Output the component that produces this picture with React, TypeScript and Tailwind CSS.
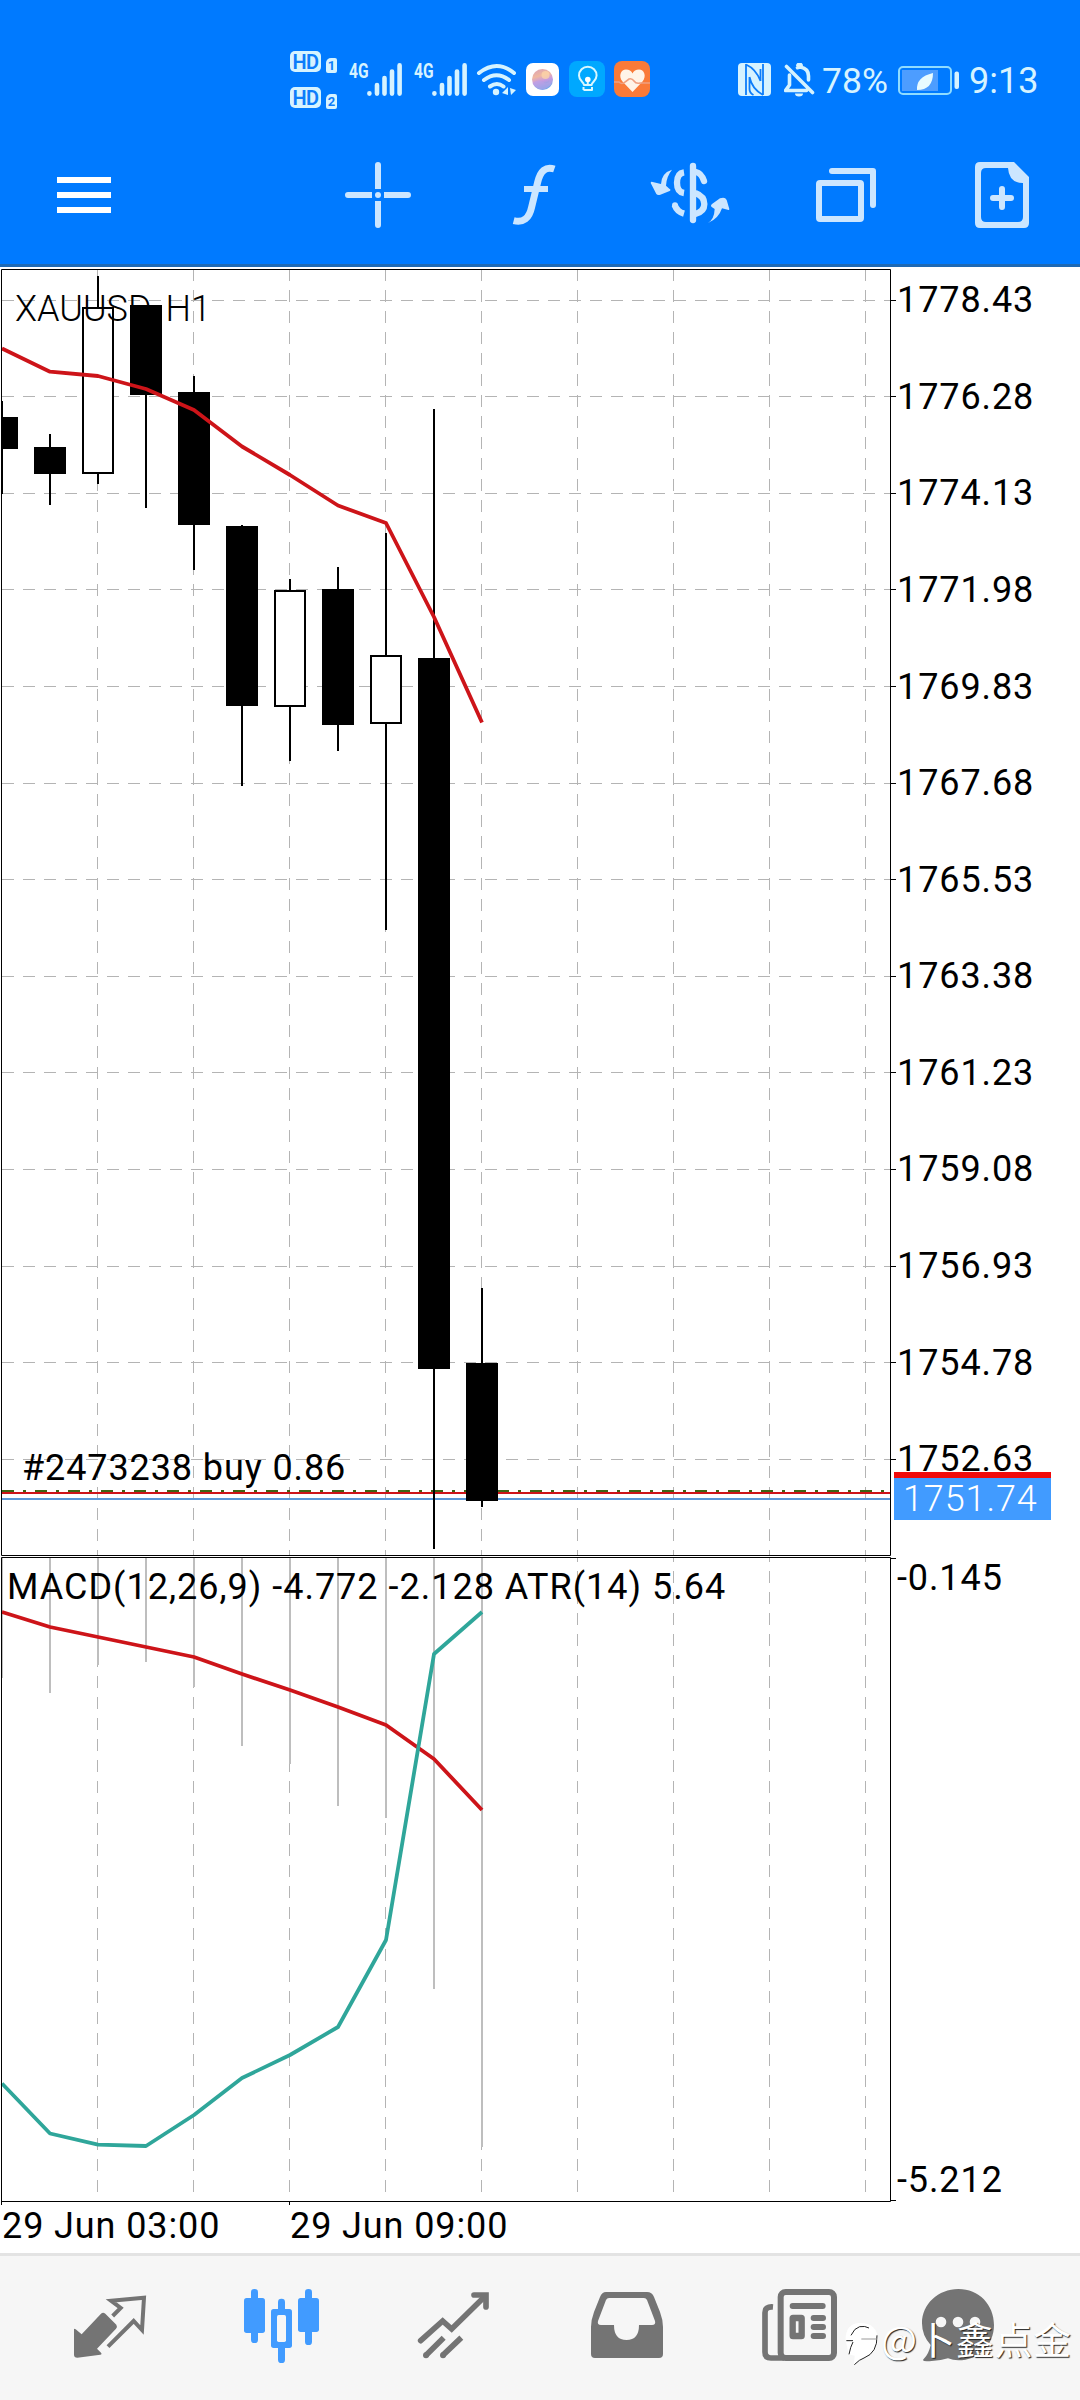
import type { ReactNode } from "react";

const PRICES = [
  "1778.43", "1776.28", "1774.13", "1771.98", "1769.83", "1767.68", "1765.53",
  "1763.38", "1761.23", "1759.08", "1756.93", "1754.78", "1752.63",
];

type Candle = { hi: number; top: number; bottom: number; lo: number; up?: boolean };

const CANDLES: Candle[] = [
  { hi: 401, top: 417, bottom: 449, lo: 494 },
  { hi: 434, top: 447, bottom: 474, lo: 505 },
  { hi: 276, top: 307, bottom: 474, lo: 484, up: true },
  { hi: 305, top: 305, bottom: 395, lo: 508 },
  { hi: 376, top: 392, bottom: 525, lo: 570 },
  { hi: 525, top: 526, bottom: 706, lo: 786 },
  { hi: 579, top: 590, bottom: 707, lo: 761, up: true },
  { hi: 567, top: 589, bottom: 725, lo: 751 },
  { hi: 533, top: 655, bottom: 724, lo: 930, up: true },
  { hi: 409, top: 658, bottom: 1369, lo: 1549 },
  { hi: 1288, top: 1363, bottom: 1501, lo: 1507 },
];

const MA = [348.5, 371.7, 376, 389, 410, 446.5, 475, 505.5, 523, 617, 722.5];
const HISTOGRAM = [1678, 1693, 1665, 1662, 1687, 1746, 1764, 1806, 1818, 1989, 2147];
const SIGNAL = [1612, 1627, 1637, 1647, 1657, 1674, 1690, 1707, 1725, 1759, 1810];
const ATR = [2083.5, 2133.5, 2144.7, 2146, 2115, 2078, 2055, 2027, 1940, 1654, 1612];

const barX = (i: number) => 2 + i * 48;
const toPoints = (ys: number[]) => ys.map((y, i) => `${barX(i)},${y}`).join(" ");

function Glyph({ box, k = 1, className, children }: { box: [number, number, number, number]; k?: number; className?: string; children: ReactNode }) {
  return (
    <svg width={box[2] / k} height={box[3] / k} viewBox={box.join(" ")} className={"block shrink-0 " + (className ?? "")} fill="none">
      {children}
    </svg>
  );
}

function HdBadge({ n }: { n: string }) {
  return (
    <div className="flex h-[22px] items-start gap-[5px]">
      <span className="flex h-[21px] w-[31px] items-center justify-center rounded-[5px] bg-[#d6f3ff] font-['Roboto'] text-[20px] leading-none font-semibold tracking-tight text-[#0d7dfa]">
        HD
      </span>
      <span className="mt-[7px] flex h-[15px] w-[11px] items-center justify-center rounded-[2px] rounded-tl-[5px] bg-[#d6f3ff] text-[13px] leading-none font-bold text-[#0d7dfa]">
        {n}
      </span>
    </div>
  );
}

function Signal({ className }: { className: string }) {
  return (
    <div className={"flex h-[33px] " + className}>
      <span className="block w-[18px] origin-left scale-x-[0.74] text-[21px] leading-[16px] font-bold whitespace-nowrap text-[#d6f3ff]">4G</span>
      <Glyph box={[0, 0, 35, 33]}>
        <g stroke="#d6f3ff" strokeWidth="4.6" strokeLinecap="round">
          <path d="M2.4 30.2v.4M10 22v8.6M17.5 15v15.6M25 8.5v22.1M32.6 2.4v28.2" />
        </g>
      </Glyph>
    </div>
  );
}

function StatusBar() {
  return (
    <div className="flex h-[117px] items-start pt-[51px] font-['Roboto',sans-serif]">
      <div className="ml-[290px] flex w-[47px] flex-col gap-[14px]">
        <HdBadge n="1" />
        <HdBadge n="2" />
      </div>
      <Signal className="mt-[12px] ml-[12px]" />
      <Signal className="mt-[12px] ml-[12px]" />
      <Glyph box={[476, 62, 42, 35]} className="mt-[11px] ml-[9px]">
        <g stroke="#d6f3ff" strokeWidth="4" strokeLinecap="round">
          <path d="M479 73q18-14 35 0M484 80q12.500-9.500 25 0M490 86.500q7-5 13.500 0" />
        </g>
        <circle cx="496" cy="92" r="3.200" fill="#d6f3ff" />
        <path d="M502 93l6-6v8zM510 88l6 2-5 5z" fill="#d6f3ff" />
      </Glyph>
      <Glyph box={[0, 0, 33, 33]} className="mt-[12px] ml-[8px]">
        <defs>
          <linearGradient id="orb" x1="0" y1="0" x2="0.3" y2="1">
            <stop offset="0" stopColor="#d9a0b8" />
            <stop offset="0.4" stopColor="#f0b8a0" />
            <stop offset="0.65" stopColor="#c79be0" />
            <stop offset="1" stopColor="#6fa8ea" />
          </linearGradient>
        </defs>
        <rect width="33" height="33" rx="7" fill="#fff" />
        <circle cx="16.500" cy="16.500" r="10.500" fill="url(#orb)" />
        <path d="M7 20q6-5 10-1t9-4q1 7-5 10-8 5-14-5" fill="#b9a2e6" opacity=".6" />
        <circle cx="19.500" cy="12" r="4" fill="#ffd9a8" opacity=".7" />
      </Glyph>
      <Glyph box={[0, 0, 36, 36]} className="mt-[10px] ml-[10px]">
        <rect width="36" height="36" rx="8" fill="#00a8ff" />
        <g stroke="#d9f7ff" strokeWidth="2">
          <path d="M15 24c0-3-5-4-5-9.500a8.800 8.800 0 0 1 17.600 0c0 5.500-5 6.500-5 9.500zM14.500 29h8.500v-3M14.500 26v3" strokeLinejoin="round" />
          <path d="M18.800 18v6" />
        </g>
        <circle cx="18.800" cy="18.500" r="2.800" fill="#fff" />
      </Glyph>
      <Glyph box={[0, 0, 36, 36]} className="mt-[10px] ml-[9px]">
        <rect width="36" height="36" rx="8" fill="#fa7a38" />
        <path d="M18.500 31L8.500 20.500C4 15 7 8.500 12 8.500c3 0 5.500 1.500 6.500 4 1-2.500 3.500-4 6.500-4 5 0 8 6.500 3.500 12z" fill="#fff4e8" />
        <path d="M0 21h5q3 3 6 0l4-3q3-1 5 2t6 2h10" stroke="#f0a080" strokeWidth="1.600" />
      </Glyph>
      <Glyph box={[0, 0, 33, 33]} className="mt-[12px] ml-[88px]">
        <rect width="33" height="33" rx="4" fill="#d6f3ff" />
        <path d="M7 2v29.500h9Q10 29 10 23V10l13 12V10Q14 3 7 2z" fill="#d6f3ff" />
        <path d="M8 1v31M8 1.500Q18 6 22.500 18M22.500 6v12M11.500 14v12q0 4 4 6M11.500 14Q14 26 25 32M25 1v31" stroke="#0d7dfa" strokeWidth="1.800" />
      </Glyph>
      <Glyph box={[0, 0, 32, 34]} className="mt-[12px] ml-[13px]">
        <g stroke="#d6f3ff" strokeWidth="3.600" strokeLinecap="round" strokeLinejoin="round">
          <path d="M2.500 3.500l26 26M5.500 12v10l-4 5.500h21M24.500 17v-4c0-5-3-8-8-9q-2 0-3 .7" />
        </g>
        <path d="M11 30.500h8a4 3 0 0 1-8 0zM12 3a3.500 3.500 0 0 1 7 0z" fill="#d6f3ff" />
      </Glyph>
      <span className="mt-[10px] ml-[6px] w-[66px] text-[35.500px] leading-[41px] whitespace-nowrap text-[#d6f3ff]">78%</span>
      <Glyph box={[897, 65, 63, 31]} className="mt-[14px] ml-[9px]">
        <rect x="899" y="67" width="52" height="27" rx="4" stroke="#8fdcff" strokeWidth="2" />
        <rect x="902" y="70" width="36" height="21" fill="#4d9dff" />
        <path d="M917 90q-1-13 16-17 0 17-16 17l13-14z" fill="#e8fbff" />
        <rect x="954.500" y="71.500" width="4.500" height="17.500" rx="2" fill="#d6f3ff" />
      </Glyph>
      <span className="mt-[10px] ml-[9px] text-[36px] leading-[41px] text-[#d6f3ff]">9:13</span>
    </div>
  );
}

function Toolbar() {
  return (
    <div className="flex h-[147px] items-start pt-[39px]">
      <Glyph box={[57, 177, 54, 36]} className="mt-[21px] ml-[57px]">
        <path d="M57 180h54M57 195h54M57 210h54" stroke="#fff" strokeWidth="6" />
      </Glyph>
      <Glyph box={[344, 161, 68, 68]} className="mt-[5px] ml-[233px]">
        <path d="M348 195h21M387 195h21M378 165v21M378 204v21" stroke="#cce6ff" strokeWidth="6" strokeLinecap="round" />
        <path d="M366 195h6M384 195h6M378 183v6M378 201v6" stroke="#cce6ff" strokeWidth="6" />
        <circle cx="378" cy="195" r="3" fill="#cce6ff" />
      </Glyph>
      <Glyph k={3} box={[36, 39, 132, 190]} className="mt-[7px] ml-[100px]">
        <path d="M163 57q-38-13-50 40l-18 74q-11 52-54 41" stroke="#cce6ff" strokeWidth="21" />
        <path d="M72 117h72" stroke="#cce6ff" strokeWidth="18" />
      </Glyph>
      <Glyph k={3} box={[450, 36, 240, 186]} className="mt-[6px] ml-[94px]">
        <g stroke="#cce6ff" strokeWidth="19">
          <path d="M552 67q-21 3-21 31t21 31" />
          <path d="M588 66q16 3 24 27" strokeLinecap="round" />
          <path d="M524 165q7 20 28 26" strokeLinecap="butt" />
          <path d="M586 129q27 10 27 33t-27 30" />
          <path d="M579 48v162" strokeLinecap="round" />
        </g>
        <circle cx="525" cy="166" r="9" fill="#cce6ff" />
        <path d="M516 59q-31 9-33 43l-28-7q-5 1-1 8l15 29q4 5 12 2l28-11q5-4-1-7l-10-9q1-27 18-48z" fill="#cce6ff" />
        <path d="M624 219q19-12 20-42l-10-7q-3-4 2-8l24-17q15-6 20 5l8 27q0 5-5 2l-17-4q-10 31-42 44z" fill="#cce6ff" />
      </Glyph>
      <Glyph box={[815, 167, 62, 56]} className="mt-[11px] ml-[85px]">
        <rect x="819" y="183" width="42" height="36" rx="1" stroke="#cce6ff" strokeWidth="6" />
        <path d="M832 171h41v34" stroke="#cce6ff" strokeWidth="6" strokeLinecap="round" strokeLinejoin="round" />
      </Glyph>
      <Glyph box={[974, 161, 56, 68]} className="mt-[5px] ml-[97px]">
        <path d="M980 162h34l15 15v46q0 5-5 5h-44q-5 0-5-5v-56q0-5 5-5zM986 168q-5 0-5 5v44q0 5 5 5h32q5 0 5-5v-34q-14 0-15-15z" fill="#cce6ff" fillRule="evenodd" />
        <path d="M993 198h18M1002 189v18" stroke="#cce6ff" strokeWidth="6" strokeLinecap="round" />
      </Glyph>
    </div>
  );
}

function Plot() {
  const columns = [97, 193, 289, 385, 481, 577, 673, 769, 865];
  return (
    <svg width="897" height="1938" viewBox="0 267 897 1938" className="block" fill="none">
      <g stroke="#b4b4b4" strokeWidth="1" strokeDasharray="12 9">
        {columns.map((x) => (
          <path key={x} d={`M${x + 0.5} 269V2201`} />
        ))}
        {PRICES.map((p, i) => (
          <path key={p} d={`M2 ${Math.floor(300.2 + i * 96.58) + 0.5}H890`} />
        ))}
      </g>
      <rect x="0" y="1556" width="890" height="1" fill="#fff" />
      <g fill="#bebebe">
        {HISTOGRAM.map((y, i) => (
          <rect key={i} x={barX(i) - 1} y="1558" width="2" height={y - 1558} />
        ))}
      </g>
      <g shapeRendering="crispEdges">
        <path d="M2 1493H891" stroke="#cd1419" strokeWidth="2" />
        <path d="M2 1491H890" stroke="#3c6414" strokeWidth="2" strokeDasharray="12 9 3 9" />
        <path d="M2 1499H891" stroke="#5a96d7" strokeWidth="2" />
        {CANDLES.map((c, i) => {
          const x = barX(i);
          const left = Math.max(2, x - 16);
          return (
            <g key={i}>
              <rect x={x - 1} y={c.hi} width="2" height={c.lo - c.hi} fill="#000" />
              <rect x={left} y={c.top} width={x + 16 - left} height={c.bottom - c.top} fill="#000" />
              {c.up && <rect x={left + 2} y={c.top + 2} width="28" height={c.bottom - c.top - 4} fill="#fff" />}
            </g>
          );
        })}
      </g>
      <polyline points={toPoints(MA)} stroke="#cd1419" strokeWidth="3.800" strokeLinejoin="round" />
      <polyline points={toPoints(SIGNAL)} stroke="#cd1419" strokeWidth="3.800" strokeLinejoin="round" />
      <polyline points={toPoints(ATR)} stroke="#2fa69a" strokeWidth="3.800" strokeLinejoin="round" />
      <g stroke="#000" strokeWidth="1">
        <path d="M1.500 269.500H890.500V1555.500H1.500zM1.500 1557.500H890.500V2201.500H1.500z" />
        <path d="M890 1558.500h6M890 2200.500h6M1.500 2201v4M289.500 2201v4" />
        {PRICES.map((p, i) => (
          <path key={p} d={`M890 ${Math.floor(300.2 + i * 96.58) + 0.5}h6`} />
        ))}
      </g>
    </svg>
  );
}

function PriceAxis() {
  return (
    <div className="relative flex w-[183px] flex-col tracking-[0.9px]">
      <div className="-mt-[15px] flex flex-col">
        {PRICES.map((p) => (
          <div key={p} className="flex h-[96.58px] items-center">
            {p}
          </div>
        ))}
      </div>
      <div className="mt-[49px] leading-[42px]">-0.145</div>
      <div className="mt-[560px] leading-[42px]">-5.212</div>
      <div className="absolute top-[1205px] -left-[3px] h-[48px] w-[157px] border-t-[6px] border-[#f00a0a] bg-[#419bff] pl-[9px] leading-[43px] font-light text-white">
        1751.74
      </div>
    </div>
  );
}

function BottomNav() {
  return (
    <nav className="relative flex h-[147px] items-start border-t-[3px] border-[#e3e3e3] bg-[#f6f6f6]">
      <Glyph k={3} box={[39, 54, 225, 225]} className="mt-[32px] ml-[73px]">
        <path d="M42 179q0-5 5-1l18 15 58-62q6-6 13 0l33 33q4 6-1 12l-57 60 12 12q4 5-2 6l-69 9q-10 0-10-9z" fill="#747474" />
        <path d="M158 138l24-24-29-22 99-9-6 97-25-27-77 77" stroke="#747474" strokeWidth="12" />
      </Glyph>
      <Glyph k={3} box={[549, 54, 231, 228]} className="mt-[32px] ml-[95px]">
        <g fill="#419bff">
          <rect x="552" y="84" width="63" height="105" rx="8" />
          <rect x="573" y="57" width="21" height="162" rx="10" />
          <rect x="714" y="84" width="63" height="102" rx="8" />
          <rect x="735" y="57" width="21" height="168" rx="10" />
          <rect x="633" y="117" width="63" height="117" rx="8" />
          <rect x="654" y="86" width="21" height="193" rx="10" />
        </g>
        <rect x="651" y="135" width="27" height="81" rx="5" fill="#f6f6f6" />
      </Glyph>
      <Glyph k={3} box={[1071, 60, 219, 210]} className="mt-[34px] ml-[97px]">
        <g stroke="#747474" strokeWidth="17">
          <path d="M1082 212l66-59 27 24 100-98" strokeLinecap="round" />
          <path d="M1242 75h36v36" strokeLinecap="round" />
          <path d="M1098 256l53-53M1148 256l56-53" />
        </g>
        <circle cx="1098" cy="256" r="9" fill="#747474" />
        <circle cx="1149" cy="256" r="9" fill="#747474" />
      </Glyph>
      <Glyph box={[590, 2291, 73, 68]} className="mt-[35px] ml-[100px]">
        <path d="M606 2292h41q5 0 7 5l6 15q3 8 3 15v27q0 4-4 4h-64q-4 0-4-4v-27q0-7 3-15l6-15q2-5 6-5zM609 2298q-2 0-3 2l-8 21q-1 4 3 4h13q0 15 12.500 15t12.500-15h13q4 0 3-4l-8-21q-1-2-3-2z" fill="#747474" fillRule="evenodd" />
      </Glyph>
      <Glyph k={3} box={[63, 54, 231, 222]} className="mt-[32px] ml-[98px]">
        <rect x="122" y="66" width="160" height="198" rx="15" stroke="#747474" strokeWidth="18" />
        <path d="M99 111q-24-2-24 17v118q0 18 18 18h40" stroke="#747474" strokeWidth="17" />
        <path d="M158 108h90M221 144h28M221 171h28M221 198h28" stroke="#747474" strokeWidth="18" strokeLinecap="round" />
        <rect x="158" y="144" width="27" height="54" rx="1" stroke="#747474" strokeWidth="19" strokeLinejoin="round" />
      </Glyph>
      <Glyph k={3} box={[540, 54, 228, 222]} className="mt-[32px] ml-[82px]">
        <path d="M655 57c62 0 107 47 107 108s-47 106-107 106q-16 0-31-6-33 11-72 8-6-3-1-6 15-14 21-42-26-28-26-65c0-58 49-103 109-103z" fill="#747474" />
        <g fill="#f6f6f6">
          <circle cx="603" cy="156" r="16" />
          <circle cx="654" cy="156" r="16" />
          <circle cx="705" cy="156" r="16" />
        </g>
      </Glyph>
      <div className="absolute top-[58px] left-[843px] flex h-[48px] items-center text-[38px] leading-none tracking-[0.5px] text-white [text-shadow:1px_1px_1px_#222]">
        <Glyph k={3} box={[310, 150, 114, 132]} className="mt-[12px]">
          <path d="M318 205q-2-48 40-52 54-2 57 50-2 38-46 54l-26 22 2-28-18-4z" fill="#fff" />
          <path d="M320 206h20M334 190q10-22 26-26 16-3 28 4M340 210q-8 15-12 37M412 190q2 52-39 68-13 4-29 20" stroke="#222" strokeWidth="3" />
          <path d="M365 201h47" stroke="#999" strokeWidth="3" />
        </Glyph>
        <span className="font-['Noto_Sans_CJK_SC',sans-serif] whitespace-nowrap">@卜鑫点金</span>
      </div>
    </nav>
  );
}

export default function App() {
  return (
    <div className="flex h-[2400px] w-[1080px] flex-col overflow-hidden bg-white font-['Roboto',sans-serif] text-black">
      <header className="h-[267px] shrink-0 border-b-[3px] border-[#1e69b4] bg-[#007aff]">
        <StatusBar />
        <Toolbar />
      </header>
      <main className="flex h-[1986px] shrink-0 flex-col text-[36px] leading-[42px]">
        <div className="flex h-[1938px]">
          <div className="relative w-[897px] shrink-0">
            <Plot />
            <div className="absolute top-[21px] left-[15px] font-light whitespace-nowrap">XAUUSD, H1</div>
            <div className="absolute top-[1180px] left-[22px] tracking-[0.9px] whitespace-nowrap">#2473238 buy 0.86</div>
            <div className="absolute top-[1299px] left-[7px] tracking-[1px] whitespace-nowrap">MACD(12,26,9) -4.772 -2.128 ATR(14) 5.64</div>
          </div>
          <PriceAxis />
        </div>
        <div className="flex">
          <span className="w-[288px] pl-[2px] tracking-[0.9px]">29 Jun 03:00</span>
          <span className="pl-[2px] tracking-[0.9px]">29 Jun 09:00</span>
        </div>
      </main>
      <BottomNav />
    </div>
  );
}
